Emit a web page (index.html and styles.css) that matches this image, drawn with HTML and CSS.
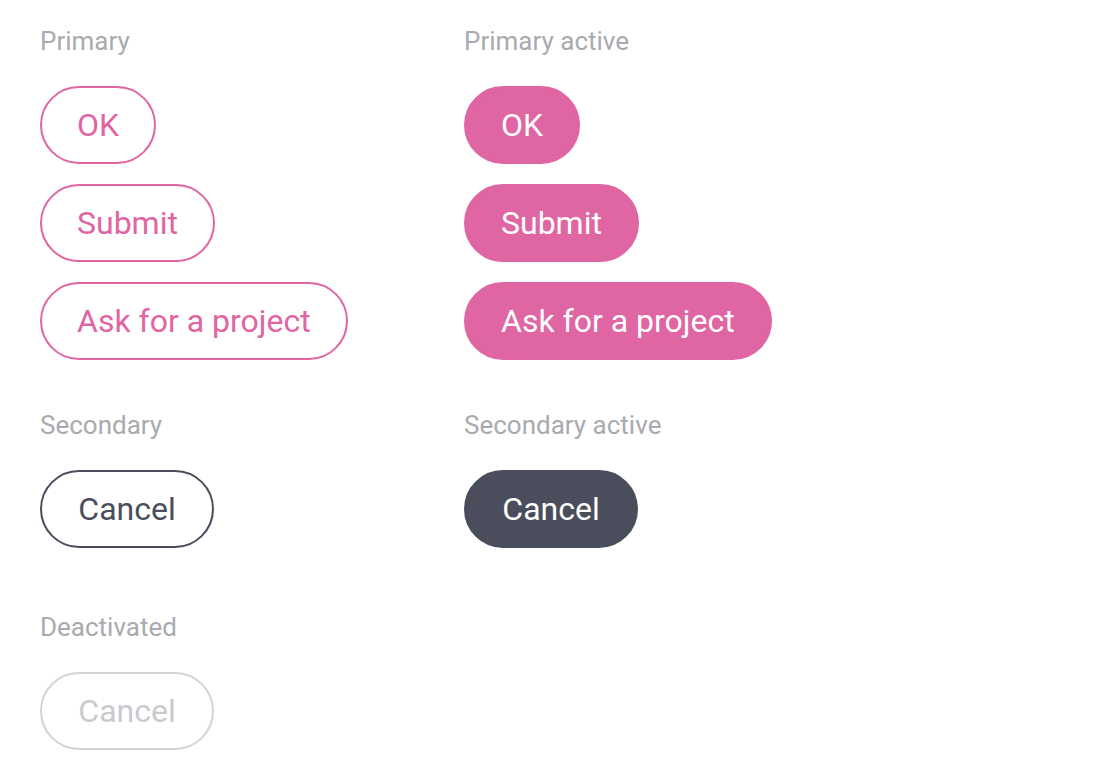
FILE: index.html
```html
<!DOCTYPE html>
<html>
<head>
<meta charset="utf-8">
<link rel="stylesheet" href="styles.css">
</head>
<body>
<main class="grid">
  <section class="group">
    <div class="label">Primary</div>
    <div class="stack">
      <button class="btn primary">OK</button>
      <button class="btn primary">Submit</button>
      <button class="btn primary">Ask for a project</button>
    </div>
  </section>
  <section class="group">
    <div class="label">Primary active</div>
    <div class="stack">
      <button class="btn primary-active">OK</button>
      <button class="btn primary-active">Submit</button>
      <button class="btn primary-active">Ask for a project</button>
    </div>
  </section>
  <section class="group row2">
    <div class="label">Secondary</div>
    <div class="stack">
      <button class="btn cancel secondary">Cancel</button>
    </div>
  </section>
  <section class="group row2">
    <div class="label">Secondary active</div>
    <div class="stack">
      <button class="btn cancel secondary-active">Cancel</button>
    </div>
  </section>
  <section class="group row3">
    <div class="label">Deactivated</div>
    <div class="stack">
      <button class="btn cancel disabled" disabled>Cancel</button>
    </div>
  </section>
</main>
</body>
</html>
```

FILE: styles.css
```css
* { box-sizing: border-box; }
html, body { margin: 0; background: #ffffff; }
body {
  font-family: Roboto, "Liberation Sans", sans-serif;
  padding: 26px 40px;
}
.grid {
  display: grid;
  grid-template-columns: 424px auto;
}
.group {
  display: flex;
  flex-direction: column;
  align-items: flex-start;
}
.row2 { margin-top: 50px; }
.row3 { margin-top: 64px; }
.label {
  font-size: 26px;
  line-height: 30px;
  color: #a9aaaf;
  margin-bottom: 30px;
}
.stack {
  display: flex;
  flex-direction: column;
  align-items: flex-start;
  gap: 20px;
}
.btn {
  font-family: Roboto, "Liberation Sans", sans-serif;
  font-size: 32px;
  height: 78px;
  padding: 0 35px;
  border-radius: 39px;
  border: 2px solid transparent;
  background: #ffffff;
  display: inline-flex;
  align-items: center;
  justify-content: center;
  cursor: pointer;
}
.cancel { min-width: 174px; }
.primary { border-color: #df65a3; color: #df65a3; }
.primary-active { background: #df65a3; border-color: #df65a3; color: #ffffff; }
.secondary { border-color: #4a4d5b; color: #4a4d5b; }
.secondary-active { background: #4a4d5b; border-color: #4a4d5b; color: #ffffff; }
.disabled { border-color: #d2d3d7; color: #c9cacf; cursor: default; }
```
